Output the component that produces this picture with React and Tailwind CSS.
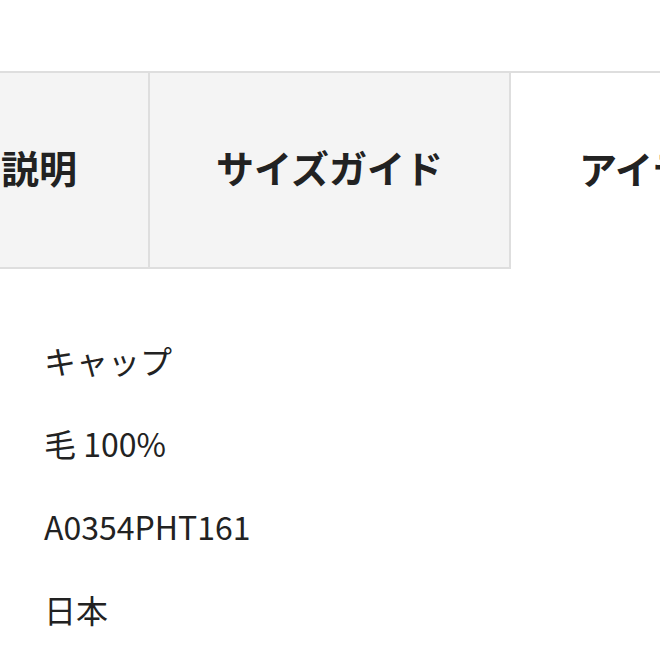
import React from 'react'

const tabs = [
    { label: 'ブランド説明', active: false },
    { label: 'サイズガイド', active: false },
    { label: 'アイテム詳細', active: true },
]

const specs = ['キャップ', '毛 100%', 'A0354PHT161', '日本']

function App() {
    return (
        <div className="w-full h-[660px] overflow-hidden bg-white text-[#222]" style={{ fontFamily: '"Noto Sans CJK JP", "Noto Sans", sans-serif' }}>
            <div className="pt-[71px]">
                {/* tabs */}
                <div className="flex ml-[-212px] border-t-2 border-[#dedede]">
                    {tabs.map((tab, i) => (
                        <div
                            key={i}
                            className={`shrink-0 h-[196px] pb-[8px] flex items-center justify-center text-[38px] font-bold ${
                                tab.active
                                    ? 'w-[360px] bg-white'
                                    : 'w-[361px] bg-[#f4f4f4] border-r-2 border-b-2 border-[#dedede]'
                            } ${i === 0 ? 'w-[362px] pr-[10px]' : ''}`}
                        >
                            <span className="whitespace-nowrap">{tab.label}</span>
                        </div>
                    ))}
                </div>

                {/* item details */}
                <div className="pt-[50px] pl-[44px]">
                    {specs.map((s, i) => (
                        <p key={i} className="text-[32px] leading-[83px] whitespace-nowrap">{s}</p>
                    ))}
                </div>
            </div>
        </div>
    )
}

export default App
